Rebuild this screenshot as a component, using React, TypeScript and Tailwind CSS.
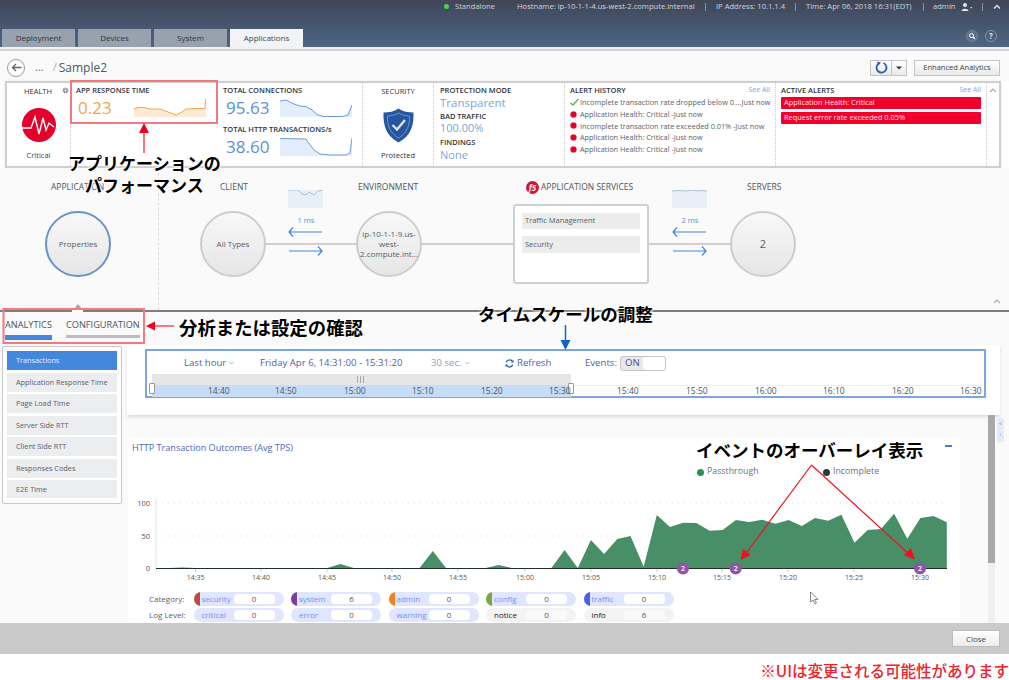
import React from "react";

const vals: number[] = [568,568,567.5,568,568,568,568,568,568,568,568,568,568,568,564,568,568,568,568,568,568,551,568,568,568,568,565,568,568,568,568,550,568,540,554,539,536,566.7,515,527,522.7,523,530.7,530,520,522,519.7,523.7,520,526,518,520.7,514.7,542.7,530,529,513.7,538.7,518,516,522.3];
const chartPts = vals.map((y, i) => `${(156 + 13.18 * i).toFixed(1)},${y}`).join(" ");
const ticks = [["14:35",195.6],["14:40",261],["14:45",327],["14:50",392],["14:55",458],["15:00",525],["15:05",591],["15:10",657],["15:15",722],["15:20",788],["15:25",854],["15:30",920]] as [string, number][];

function Spark({ line, w, h, stroke, fill }: { line: string; w: number; h: number; stroke: string; fill: string }) {
  return (
    <svg width={w} height={h} viewBox={`0 0 ${w} ${h}`} className="block shrink-0">
      <polygon points={`0,${h} ${line} ${w},${h}`} fill={fill} />
      <polyline points={line} fill="none" stroke={stroke} strokeWidth="1" />
    </svg>
  );
}

function Tab({ label, active }: { label: string; active?: boolean }) {
  return (
    <div className={`flex h-[18px] w-[73px] items-center justify-center text-[8px] ${active ? "bg-[#f1f3f5] text-[#3c4654]" : "bg-[#98a2ae] text-[#2c3440]"}`}>
      {label}
    </div>
  );
}

function Heading({ children }: { children: React.ReactNode }) {
  return <div className="text-[7.5px] leading-[10px] font-semibold whitespace-nowrap text-[#2d3340]">{children}</div>;
}

function AlertRow({ text, ok }: { text: string; ok?: boolean }) {
  return (
    <div className={`flex h-[11.8px] items-center whitespace-nowrap text-[7.3px] text-[#5a6068] ${ok ? "gap-[1px]" : "gap-[3px]"}`}>
      {ok ? (
        <svg width="9" height="8" viewBox="0 0 9 8" className="shrink-0"><path d="M0.5 5 L3 7 L8.5 1" fill="none" stroke="#5cb85c" strokeWidth="1.5" /></svg>
      ) : (
        <svg width="7" height="7" viewBox="0 0 7 7" className="shrink-0"><polygon points="2,0.5 5,0.5 6.5,2 6.5,5 5,6.5 2,6.5 0.5,5 0.5,2" fill="#e4002b" /></svg>
      )}
      <span>{text}</span>
    </div>
  );
}

function Circle({ children, blue, left, extra }: { children: React.ReactNode; blue?: boolean; left: number; extra?: string }) {
  return (
    <div
      style={{ left }}
      className={`absolute top-[43px] flex h-[66px] w-[66px] items-center justify-center rounded-full border-2 bg-gradient-to-b from-[#f8f8f8] to-[#e6e6e6] px-[6px] text-center text-[8px] leading-[10px] text-[#555c66] ${blue ? "border-[#6a92c8]" : "border-[#cdcdcd]"} ${extra ?? ""}`}
    >
      {children}
    </div>
  );
}

function FlowArrows({ left, label, wave }: { left: number; label: string; wave: string }) {
  return (
    <div style={{ left }} className="absolute top-[22px] w-[36px]">
      <svg width="35" height="18" viewBox="0 0 35 18" className="block">
        <rect width="35" height="18" fill="#e9eff7" />
        <polyline points={wave} fill="none" stroke="#a9bfdc" strokeWidth="1" />
      </svg>
      <div className="mt-[7px] text-center text-[7.5px] leading-[10px] text-[#6f88dc]">{label}</div>
      <svg width="36" height="32" viewBox="0 0 36 32" className="mt-[2px] block">
        <path d="M1 5 H34 M5 0.5 L1 5 L5 9.5" fill="none" stroke="#4088dc" strokeWidth="1.2" />
        <path d="M1 24 H34 M30 19.5 L34 24 L30 28.5" fill="none" stroke="#4088dc" strokeWidth="1.2" />
      </svg>
    </div>
  );
}

function SideItem({ label, active, h }: { label: string; active?: boolean; h: number }) {
  return (
    <div style={{ height: h }} className={`flex items-center pl-[9px] text-[7.3px] ${active ? "bg-[#4488dd] text-[#e8f0fb]" : "bg-[#ecedef] text-[#5a6068]"}`}>
      {label}
    </div>
  );
}

function Pill({ label, value, color, gray }: { label: string; value: string; color?: string; gray?: boolean }) {
  return (
    <div className={`relative flex h-[14px] w-[90px] shrink-0 items-center overflow-hidden rounded-full text-[8px] ${gray ? "bg-[#f3f3f3] text-[#222]" : "bg-[#dfe6fd] text-[#7a8cf0]"}`}>
      {color && <div style={{ background: color }} className="h-full w-[6px] shrink-0" />}
      <span className={`whitespace-nowrap ${color ? "ml-[2px]" : "ml-[8px]"}`}>{label}</span>
      <div className={`absolute top-[2px] left-[40px] flex h-[10px] w-[41px] items-center justify-center rounded-[4px] text-[#555] ${gray ? "bg-[#f9f9f9]" : "bg-white"}`}>{value}</div>
    </div>
  );
}

const note = "absolute whitespace-nowrap font-bold text-black [font-family:'Noto_Sans_CJK_JP',sans-serif] [text-shadow:0_0_3px_#fff,0_0_3px_#fff,0_0_2px_#fff]";

export default function App() {
  return (
    <div className="relative h-[680px] w-[1009px] overflow-hidden bg-white [font-family:'Open_Sans',sans-serif]">
      {/* Header */}
      <div className="flex h-[47px] flex-col bg-gradient-to-b from-[#3f4657] to-[#4e6583]">
        <div className="flex h-[13px] items-center text-[7.6px] text-[#cfd5dc]">
          <div className="ml-[444px] h-[5px] w-[5px] shrink-0 rounded-full bg-[#4fd04f]" />
          <span className="ml-[6px] w-[62px] shrink-0">Standalone</span>
          <span className="w-[188px] shrink-0 whitespace-nowrap">Hostname: ip-10-1-1-4.us-west-2.compute.internal</span>
          <span className="h-[8px] w-[1px] shrink-0 bg-[#8a93a3]" />
          <span className="ml-[10px] w-[79px] shrink-0 whitespace-nowrap">IP Address: 10.1.1.4</span>
          <span className="h-[8px] w-[1px] shrink-0 bg-[#8a93a3]" />
          <span className="ml-[10px] w-[117px] shrink-0 whitespace-nowrap">Time: Apr 06, 2018 16:31(EDT)</span>
          <span className="h-[8px] w-[1px] shrink-0 bg-[#8a93a3]" />
          <span className="ml-[9px] w-[28px] shrink-0">admin</span>
          <svg width="12" height="8" viewBox="0 0 12 8" className="shrink-0"><circle cx="4" cy="2" r="2" fill="#e4e7ea" /><path d="M0.5 8 C1 5 7 5 7.5 8 Z" fill="#e4e7ea" /><path d="M9 4 L11.5 4 L10.2 5.5 Z" fill="#cfd5dc" /></svg>
          <span className="ml-[9px] h-[8px] w-[1px] shrink-0 bg-[#8a93a3]" />
          <svg width="8" height="6" viewBox="0 0 8 6" className="ml-[10px] shrink-0"><path d="M1 4.5 L4 1.5 L7 4.5" fill="none" stroke="#e4e7ea" strokeWidth="1.4" /></svg>
        </div>
        <div className="mt-[16px] flex h-[18px] items-end">
          <div className="ml-[2px] flex gap-[3px]">
            <Tab label="Deployment" />
            <Tab label="Devices" />
            <Tab label="System" />
            <Tab label="Applications" active />
          </div>
          <div className="mr-[12px] mb-[5px] ml-auto flex gap-[7px]">
            <svg width="12" height="12" viewBox="0 0 12 12"><circle cx="6" cy="6" r="5.5" fill="#5a6f8c" stroke="#7f90a8" strokeWidth="0.7" /><circle cx="5.5" cy="5.5" r="2" fill="none" stroke="#fff" strokeWidth="1" /><path d="M7 7 L9 9" stroke="#fff" strokeWidth="1.2" /></svg>
            <div className="flex h-[12px] w-[12px] items-center justify-center rounded-full border border-[#8494ab] text-[8px] leading-none font-bold text-[#e4e7ea]">?</div>
          </div>
        </div>
      </div>
      <div className="h-[4px] border-b-2 border-[#cfd1d3] bg-[#f0f1f2]" />

      {/* Breadcrumb */}
      <div className="flex h-[30px] items-center bg-[#fafafa] pt-[3px] pr-[9px] pl-[7px]">
        <div className="flex h-[18px] w-[18px] items-center justify-center rounded-full border border-[#9a9a9a] bg-white">
          <svg width="11" height="9" viewBox="0 0 11 9"><path d="M10.5 4.5 H1.5 M5 1 L1.5 4.5 L5 8" fill="none" stroke="#666" strokeWidth="1.3" /></svg>
        </div>
        <span className="ml-[10px] text-[11px] text-[#5d6672]">...</span>
        <span className="ml-[9px] text-[11px] text-[#aab0b8]">/</span>
        <span className="ml-[2px] text-[12px] text-[#4f5864]">Sample2</span>
        <div className="ml-auto flex h-[16px] items-stretch">
          <div className="flex w-[22px] items-center justify-center border border-[#c4c4c4] bg-gradient-to-b from-white to-[#e8e8e8]">
            <svg width="13" height="13" viewBox="0 0 13 13"><path d="M3.5 2.6 A5 5 0 1 0 8.5 2" fill="none" stroke="#2c5fa8" strokeWidth="1.8" /><path d="M2 0.5 L6 1.5 L3.5 4.5 Z" fill="#2c5fa8" /></svg>
          </div>
          <div className="flex w-[15px] items-center justify-center border-y border-r border-[#c4c4c4] bg-gradient-to-b from-white to-[#e8e8e8]">
            <svg width="6" height="4" viewBox="0 0 6 4"><path d="M0 0.5 H6 L3 3.5 Z" fill="#333" /></svg>
          </div>
          <div className="ml-[7px] flex w-[86px] items-center justify-center border border-[#c4c4c4] bg-gradient-to-b from-white to-[#e8e8e8] text-[7.5px] whitespace-nowrap text-[#444]">Enhanced Analytics</div>
        </div>
      </div>

      {/* Summary card */}
      <div className="ml-[5px] flex h-[87px] w-[996px] border-2 border-[#cfcfcf] bg-white shadow-sm">
        <div className="relative flex w-[64px] shrink-0 flex-col items-center border-r border-dotted border-[#c9c9c9] pt-[2px]">
          <div className="flex w-full">
            <span className="ml-[17px] text-[7.5px] leading-[12px] text-[#2d3340]">HEALTH</span>
            <svg width="7" height="7" viewBox="0 0 7 7" className="mt-[2px] ml-[10px]"><circle cx="3.5" cy="3.5" r="2.3" fill="#8a8f96" stroke="#8a8f96" strokeWidth="1.2" strokeDasharray="1.1 0.7" /><circle cx="3.5" cy="3.5" r="1" fill="#fff" /></svg>
          </div>
          <svg width="36" height="34" viewBox="0 0 36 34" className="mt-[11px]">
            <circle cx="18" cy="17" r="17" fill="#e4002b" />
            <polyline points="0,20 10,20 14,9 18,26 22,10 25,22 28,15 33,19" fill="none" stroke="#fff" strokeWidth="1.4" />
          </svg>
          <span className="mt-[8px] text-[7.5px] text-[#3d4450]">Critical</span>
        </div>
        <div className="flex w-[292px] shrink-0 border-r border-dotted border-[#c9c9c9]">
          <div className="w-[152px] shrink-0 pt-[2px] pl-[5px]">
            <Heading>APP RESPONSE TIME</Heading>
            <div className="mt-[1px] flex items-center">
              <span className="ml-[2px] w-[56px] text-[17px] leading-[24px] text-[#f5a54a]">0.23</span>
              <Spark w={72} h={18} stroke="#efa84a" fill="#fbebd6" line="0,10 4,8.5 10,8.5 16,10 26,10 34,13 42,16 48,13 52,10 62,9.5 71,9.5 71.5,0" />
            </div>
          </div>
          <div className="pt-[2px]">
            <Heading>TOTAL CONNECTIONS</Heading>
            <div className="mt-[1px] flex items-center">
              <span className="ml-[3px] w-[54px] text-[17px] leading-[24px] text-[#5a90d8]">95.63</span>
              <Spark w={72} h={18} stroke="#6a9be0" fill="#e3edfb" line="0,2 6,1 14,5 20,7 26,7.5 32,11 38,16 44,17.5 52,17.5 62,17.5 68,16 72,6" />
            </div>
            <div className="mt-[4px]"><Heading>TOTAL HTTP TRANSACTIONS/s</Heading></div>
            <div className="mt-[1px] flex items-center">
              <span className="ml-[3px] w-[54px] text-[17px] leading-[24px] text-[#5a90d8]">38.60</span>
              <Spark w={72} h={18} stroke="#6a9be0" fill="#e3edfb" line="0,0.5 26,1 28,4 34,12 40,16 50,17 66,17 70,15 72,0" />
            </div>
          </div>
        </div>
        <div className="flex w-[71px] shrink-0 flex-col items-center border-r border-dotted border-[#c9c9c9] pt-[2px] text-[7.5px] text-[#2d3340]">
          <span className="leading-[12px]">SECURITY</span>
          <svg width="31" height="35" viewBox="0 0 31 35" className="mt-[11px]">
            <path d="M15.5 0.5 C20 3.5 25 4.5 30.5 4.5 C31 17 28 28 15.5 34.5 C3 28 0 17 0.5 4.5 C6 4.5 11 3.5 15.5 0.5 Z" fill="#26569e" />
            <path d="M15.5 5 C19 7 23 8 26.5 8 C27 17 24 25 15.5 30 C7 25 4 17 4.5 8 C8 8 12 7 15.5 5 Z" fill="none" stroke="#7ea3d6" strokeWidth="0.8" />
            <path d="M9.5 17 L14 21.5 L22 12" fill="none" stroke="#dfe9f6" strokeWidth="2.2" />
          </svg>
          <span className="mt-[6px] leading-[12px]">Protected</span>
        </div>
        <div className="w-[131px] shrink-0 border-r border-dotted border-[#c9c9c9] pt-[2px] pl-[6px]">
          <Heading>PROTECTION MODE</Heading>
          <div className="mt-[1px] text-[11.5px] leading-[14px] text-[#7aa5e0]">Transparent</div>
          <div className="mt-[1px]"><Heading>BAD TRAFFIC</Heading></div>
          <div className="text-[11px] leading-[14px] text-[#7aa5e0]">100.00%</div>
          <div className="mt-[2px]"><Heading>FINDINGS</Heading></div>
          <div className="text-[11px] leading-[15px] text-[#7aa5e0]">None</div>
        </div>
        <div className="w-[211px] shrink-0 border-r border-dotted border-[#c9c9c9] px-[5px] pt-[2px]">
          <div className="flex items-center justify-between">
            <Heading>ALERT HISTORY</Heading>
            <span className="text-[7px] leading-[10px] text-[#7aa5e0]">See All</span>
          </div>
          <div className="mt-[1.5px]">
            <AlertRow ok text="Incomplete transaction rate dropped below 0....Just now" />
            <AlertRow text="Application Health: Critical -Just now" />
            <AlertRow text="Incomplete transaction rate exceeded 0.01% -Just now" />
            <AlertRow text="Application Health: Critical -Just now" />
            <AlertRow text="Application Health: Critical -Just now" />
          </div>
        </div>
        <div className="w-[211px] shrink-0 border-r border-dotted border-[#c9c9c9] px-[5px] pt-[2px]">
          <div className="flex items-center justify-between">
            <Heading>ACTIVE ALERTS</Heading>
            <span className="text-[7px] leading-[10px] text-[#7aa5e0]">See All</span>
          </div>
          <div className="mt-[2px] flex h-[12px] items-center rounded-[1px] bg-[#f2002b] pl-[3px] text-[7.4px] text-[#ffe5e8]">Application Health: Critical</div>
          <div className="mt-[3px] flex h-[12px] items-center rounded-[1px] bg-[#f2002b] pl-[3px] text-[7.4px] text-[#ffe5e8]">Request error rate exceeded 0.05%</div>
        </div>
        <div className="flex flex-1 justify-center pt-[5px]">
          <svg width="8" height="5" viewBox="0 0 8 5"><path d="M1 4 L4 1 L7 4" fill="none" stroke="#aaa" strokeWidth="1.2" /></svg>
        </div>
      </div>

      {/* Topology */}
      <div className="relative h-[144px] border-b-2 border-[#7d7d7d] bg-[#fafafa] text-[8.5px] text-[#4c5460]">
        <div className="absolute top-0 left-[158px] h-full border-l border-dashed border-[#dcdcdc]" />
        <div className="absolute top-[13px] left-[51px]">APPLICATION</div>
        <div className="absolute top-[13px] left-[220px]">CLIENT</div>
        <div className="absolute top-[13px] left-[358px]">ENVIRONMENT</div>
        <div className="absolute top-[13px] left-[526px] flex items-center gap-[2px]">
          <div className="flex h-[13px] w-[13px] items-center justify-center rounded-full bg-[#d8112f] text-[8px] leading-none font-bold text-white italic">f5</div>
          <span>APPLICATION SERVICES</span>
        </div>
        <div className="absolute top-[13px] left-[747px]">SERVERS</div>
        <div className="absolute top-[75px] left-[264px] h-[2px] w-[470px] bg-[#cfcfcf]" />
        <Circle blue left={45}>Properties</Circle>
        <Circle left={200}>All Types</Circle>
        <Circle left={356}>ip-10-1-1-9.us-west-2.compute.int...</Circle>
        <Circle left={730} extra="text-[11px] text-[#333]">2</Circle>
        <FlowArrows left={288} label="1 ms" wave="0,0 10,0 14,4 18,5 21,2 26,5 30,1 35,0" />
        <FlowArrows left={672} label="2 ms" wave="0,1 8,0.5 14,1 20,0 26,1 30,0.5 35,1" />
        <div className="absolute top-[36px] left-[513px] flex h-[80px] w-[136px] flex-col gap-[7px] rounded-[3px] border-2 border-[#cfcfcf] bg-white px-[7px] pt-[7px] text-[7.5px] text-[#555c66]">
          <div className="flex h-[16px] items-center bg-[#ececec] pl-[3px]">Traffic Management</div>
          <div className="flex h-[17px] items-center bg-[#ececec] pl-[3px]">Security</div>
        </div>
        <svg width="8" height="5" viewBox="0 0 8 5" className="absolute top-[131px] left-[993px]"><path d="M1 4 L4 1 L7 4" fill="none" stroke="#aaa" strokeWidth="1.2" /></svg>
        <svg width="8" height="6" viewBox="0 0 8 6" className="absolute top-[136px] left-[74px]"><path d="M0 5 L4 0 L8 5 Z" fill="#a8a8a8" /></svg>
        <div className="absolute -bottom-[2px] left-[72px] h-[2px] w-[11px] bg-white" />
      </div>

      {/* Lower area */}
      <div className="flex h-[311px] bg-[#fafafa]">
        <div className="w-[127px] shrink-0">
          <div className="flex h-[34px] pl-[5px] text-[9.2px] text-[#4c5460]">
            <div className="flex w-[47px] shrink-0 flex-col pt-[7px]">
              <span className="h-[16px] leading-[12px] whitespace-nowrap">ANALYTICS</span>
              <div className="h-[5px] bg-[#4488dd]" />
            </div>
            <div className="ml-[14px] flex w-[74px] shrink-0 flex-col pt-[7px]">
              <span className="h-[16px] leading-[12px] whitespace-nowrap">CONFIGURATION</span>
              <div className="h-[3px] bg-[#bdbdbd]" />
            </div>
          </div>
          <div className="ml-[2px] flex w-[120px] flex-col gap-[2.5px] rounded-[2px] border border-[#c8c8c8] bg-white px-[4px] pt-[4px] pb-[5px]">
            <SideItem active label="Transactions" h={19} />
            <SideItem label="Application Response Time" h={19} />
            <SideItem label="Page Load Time" h={19} />
            <SideItem label="Server Side RTT" h={19} />
            <SideItem label="Client Side RTT" h={19} />
            <SideItem label="Responses Codes" h={19} />
            <SideItem label="E2E Time" h={18} />
          </div>
        </div>
        <div className="flex min-w-0 flex-1 flex-col pt-[33px]">
          {/* Timeline */}
          <div className="h-[70px] w-[873px] bg-white pt-[4px] pl-[18px] shadow-[0_2px_3px_rgba(0,0,0,0.12)]">
            <div className="flex h-[49px] w-[841px] flex-col border-2 border-[#7aa7de] bg-white">
              <div className="flex h-[23px] items-center pt-[1px] text-[9.6px] text-[#52629f]">
                <span className="ml-[37px] flex w-[76px] items-center gap-[3px]">Last hour<svg width="5" height="4" viewBox="0 0 5 4"><path d="M0.5 1 L2.5 3 L4.5 1" fill="none" stroke="#8a94b8" strokeWidth="0.7" /></svg></span>
                <span className="w-[171px] whitespace-nowrap">Friday Apr 6, 14:31:00 - 15:31:20</span>
                <span className="flex w-[74px] items-center gap-[3px] text-[#9a9fa8]">30 sec.<svg width="5" height="4" viewBox="0 0 5 4"><path d="M0.5 1 L2.5 3 L4.5 1" fill="none" stroke="#9a9fa8" strokeWidth="0.7" /></svg></span>
                <svg width="9" height="9" viewBox="0 0 9 9"><path d="M7.8 3 A3.6 3.6 0 0 0 1.2 3.2 M1.2 6 A3.6 3.6 0 0 0 7.8 5.8" fill="none" stroke="#2c5fa8" strokeWidth="1.3" /><path d="M8.5 0.8 V3.6 H5.8 Z M0.5 8.2 V5.4 H3.2 Z" fill="#2c5fa8" /></svg>
                <span className="ml-[3px] w-[68px]">Refresh</span>
                <span className="w-[35px]">Events:</span>
                <div className="flex h-[15px] w-[46px] items-center rounded-[3px] border border-[#c4c4c4] bg-[#e9e9e9]">
                  <span className="w-[22px] pl-[4px] text-[#3d4fa0]">ON</span>
                  <div className="h-full flex-1 rounded-[3px] bg-white" />
                </div>
              </div>
              <div className="relative ml-[5px] h-[23px] flex-1">
                <div className="h-[11px] w-[419px] bg-[#e6e6e6]" />
                <div className="absolute top-[11px] left-0 h-[12px] w-[419px] bg-[#c5ddf8]" />
                <div className="absolute top-[11px] left-[419px] h-[1px] w-[410px] bg-[#eee]" />
                <div className="absolute top-[2px] left-[205px] flex gap-[2px]"><i className="h-[7px] w-[1px] bg-[#aaa]" /><i className="h-[7px] w-[1px] bg-[#aaa]" /><i className="h-[7px] w-[1px] bg-[#aaa]" /></div>
                <div className="absolute top-[9px] -left-[3px] h-[11px] w-[6px] rounded-[1px] border border-[#999] bg-white" />
                <div className="absolute top-[9px] left-[416px] h-[11px] w-[6px] rounded-[1px] border border-[#999] bg-white" />
                <div className="absolute top-[11px] left-0 flex h-[12px] items-center text-[8.5px] text-[#4c5460]">
                  {[["14:40",56],["14:50",123],["15:00",192],["15:10",260],["15:20",329],["15:30",397],["15:40",465],["15:50",534],["16:00",603],["16:10",671],["16:20",740],["16:30",808]].map(([t, x]) => (
                    <span key={t as string} style={{ left: x as number }} className="absolute">{t}</span>
                  ))}
                </div>
              </div>
            </div>
          </div>
          {/* Chart section */}
          <div className="flex h-[208px]">
            <div className="mt-[23px] ml-[1px] flex h-[185px] w-[832px] shrink-0 flex-col overflow-hidden bg-white">
              <div className="flex h-[19px] shrink-0 items-end pb-[2px] pl-[4px] text-[9.1px] text-[#4a66bc]">
                <span>HTTP Transaction Outcomes (Avg TPS)</span>
                <div className="mr-[8px] mb-[8px] ml-auto h-[2px] w-[7px] bg-[#4a7ac8]" />
              </div>
              <div className="mt-[8px] flex h-[14px] shrink-0 items-center text-[8.8px] text-[#6b7280]">
                <span className="ml-[569px] h-[7px] w-[7px] rounded-full bg-[#2f8a5c]" />
                <span className="ml-[3px] w-[66px]">Passthrough</span>
                <span className="ml-[50px] h-[7px] w-[7px] rounded-full bg-[#2a3a34]" />
                <span className="ml-[3px]">Incomplete</span>
              </div>
              <svg width="832" height="91" viewBox="128 497 832 91" className="mt-[18px] block shrink-0">
                <line x1="156" y1="503" x2="947" y2="503" stroke="#ddd" strokeWidth="1" strokeDasharray="1 5" />
                <line x1="156" y1="536" x2="947" y2="536" stroke="#ddd" strokeWidth="1" strokeDasharray="1 5" />
                <line x1="156" y1="498" x2="156" y2="572" stroke="#e4e4e4" strokeWidth="1" />
                <text x="150" y="506" textAnchor="end" fontSize="7.5" fill="#555">100</text>
                <text x="150" y="539" textAnchor="end" fontSize="7.5" fill="#555">50</text>
                <text x="150" y="571" textAnchor="end" fontSize="7.5" fill="#555">0</text>
                <polygon points={`156,568.5 ${chartPts} 946.8,568.5`} fill="#488f68" />
                <line x1="156" y1="568.5" x2="947" y2="568.5" stroke="#22302a" strokeWidth="1" />
                {ticks.map(([t, x]) => (
                  <g key={t}>
                    <line x1={x} y1="569" x2={x} y2="572" stroke="#ccc" />
                    <text x={x} y="580" textAnchor="middle" fontSize="7" fill="#555">{t}</text>
                  </g>
                ))}
                {[683, 735.7, 920].map((x) => (
                  <g key={x}>
                    <circle cx={x} cy="568.5" r="6" fill="#8e55a8" />
                    <text x={x} y="571" textAnchor="middle" fontSize="7" fill="#fff" fontWeight="600">2</text>
                  </g>
                ))}
              </svg>
              <div className="mt-[4px] flex flex-col gap-[2px] text-[#5a6068]">
                <div className="flex items-center gap-[7.5px]">
                  <span className="w-[58px] shrink-0 pl-[21px] text-[8px] whitespace-nowrap">Category:</span>
                  <Pill label="security" value="0" color="#c04a40" />
                  <Pill label="system" value="6" color="#7b3fa0" />
                  <Pill label="admin" value="0" color="#f58220" />
                  <Pill label="config" value="0" color="#7aa83c" />
                  <Pill label="traffic" value="0" color="#4a5ef0" />
                </div>
                <div className="flex items-center gap-[7.5px]">
                  <span className="w-[58px] shrink-0 pl-[21px] text-[8px] whitespace-nowrap">Log Level:</span>
                  <Pill label="critical" value="0" />
                  <Pill label="error" value="0" />
                  <Pill label="warning" value="0" />
                  <Pill label="notice" value="0" gray />
                  <Pill label="info" value="6" gray />
                </div>
              </div>
            </div>
            <div className="ml-[28px] h-full w-[7px] shrink-0 bg-[#f0f0f0]">
              <div className="h-[148px] w-full bg-[#a8a8a8]" />
            </div>
            <div className="mt-[3px] ml-[2px] flex h-[24px] w-[7px] flex-col items-center bg-[#e3ecf8] text-[6px] leading-[11px] text-[#6a7a9a]">
              <span>«</span><span>‹</span>
            </div>
          </div>
        </div>
      </div>

      {/* Footer */}
      <div className="flex h-[31px] items-start justify-end bg-[#cacaca] pt-[7px] pr-[9px]">
        <div className="flex h-[17px] w-[48px] items-center justify-center border border-[#bdbdbd] bg-gradient-to-b from-white to-[#ececec] text-[8px] text-[#444]">Close</div>
      </div>
      <div className="flex h-[26px] items-center justify-end pt-[8px] text-[15.5px] font-medium whitespace-nowrap text-[#f0202c] [font-family:'Noto_Sans_CJK_JP',sans-serif]">※UIは変更される可能性があります</div>

      {/* Annotations */}
      <svg width="1009" height="680" viewBox="0 0 1009 680" className="pointer-events-none absolute top-0 left-0">
        <rect x="71" y="81" width="146" height="42" fill="none" stroke="#f5787e" strokeWidth="2" />
        <rect x="3.5" y="309" width="140.5" height="34" fill="none" stroke="#f5787e" strokeWidth="2" />
        <line x1="144" y1="132" x2="144" y2="153" stroke="#f5787e" strokeWidth="2" />
        <polygon points="144,123 139,133 149,133" fill="#f00020" />
        <line x1="155" y1="326" x2="174" y2="326" stroke="#f5787e" strokeWidth="2" />
        <polygon points="146,326 155,321.5 155,330.5" fill="#f00020" />
        <line x1="565.5" y1="325" x2="565.5" y2="341" stroke="#1068c0" strokeWidth="1.5" />
        <polygon points="565.5,350 560.5,340 570.5,340" fill="#1068c0" />
        <line x1="811.5" y1="465" x2="744" y2="556" stroke="#f01020" strokeWidth="1.2" />
        <line x1="811.5" y1="465" x2="911" y2="556" stroke="#f01020" strokeWidth="1.2" />
        <polygon points="740.5,560 743,549 751,555" fill="#f01020" />
        <polygon points="915,560 904,555 911,548" fill="#f01020" />
        <path d="M810.5 592 L810.5 602 L813 600 L815 604 L816.5 603 L814.5 599.5 L818 599.5 Z" fill="#fff" stroke="#555" strokeWidth="0.7" />
      </svg>
      <div className={`${note} top-[151px] left-[68px] text-[17px] leading-[24px]`}>アプリケーションの</div>
      <div className={`${note} top-[173px] left-[85px] text-[17px] leading-[24px]`}>パフォーマンス</div>
      <div className={`${note} top-[315px] left-[179px] text-[18.4px] leading-[24px]`}>分析または設定の確認</div>
      <div className={`${note} top-[302px] left-[478px] text-[17.5px] leading-[24px]`}>タイムスケールの調整</div>
      <div className={`${note} top-[438px] left-[696px] text-[17.5px] leading-[24px]`}>イベントのオーバーレイ表示</div>
    </div>
  );
}
